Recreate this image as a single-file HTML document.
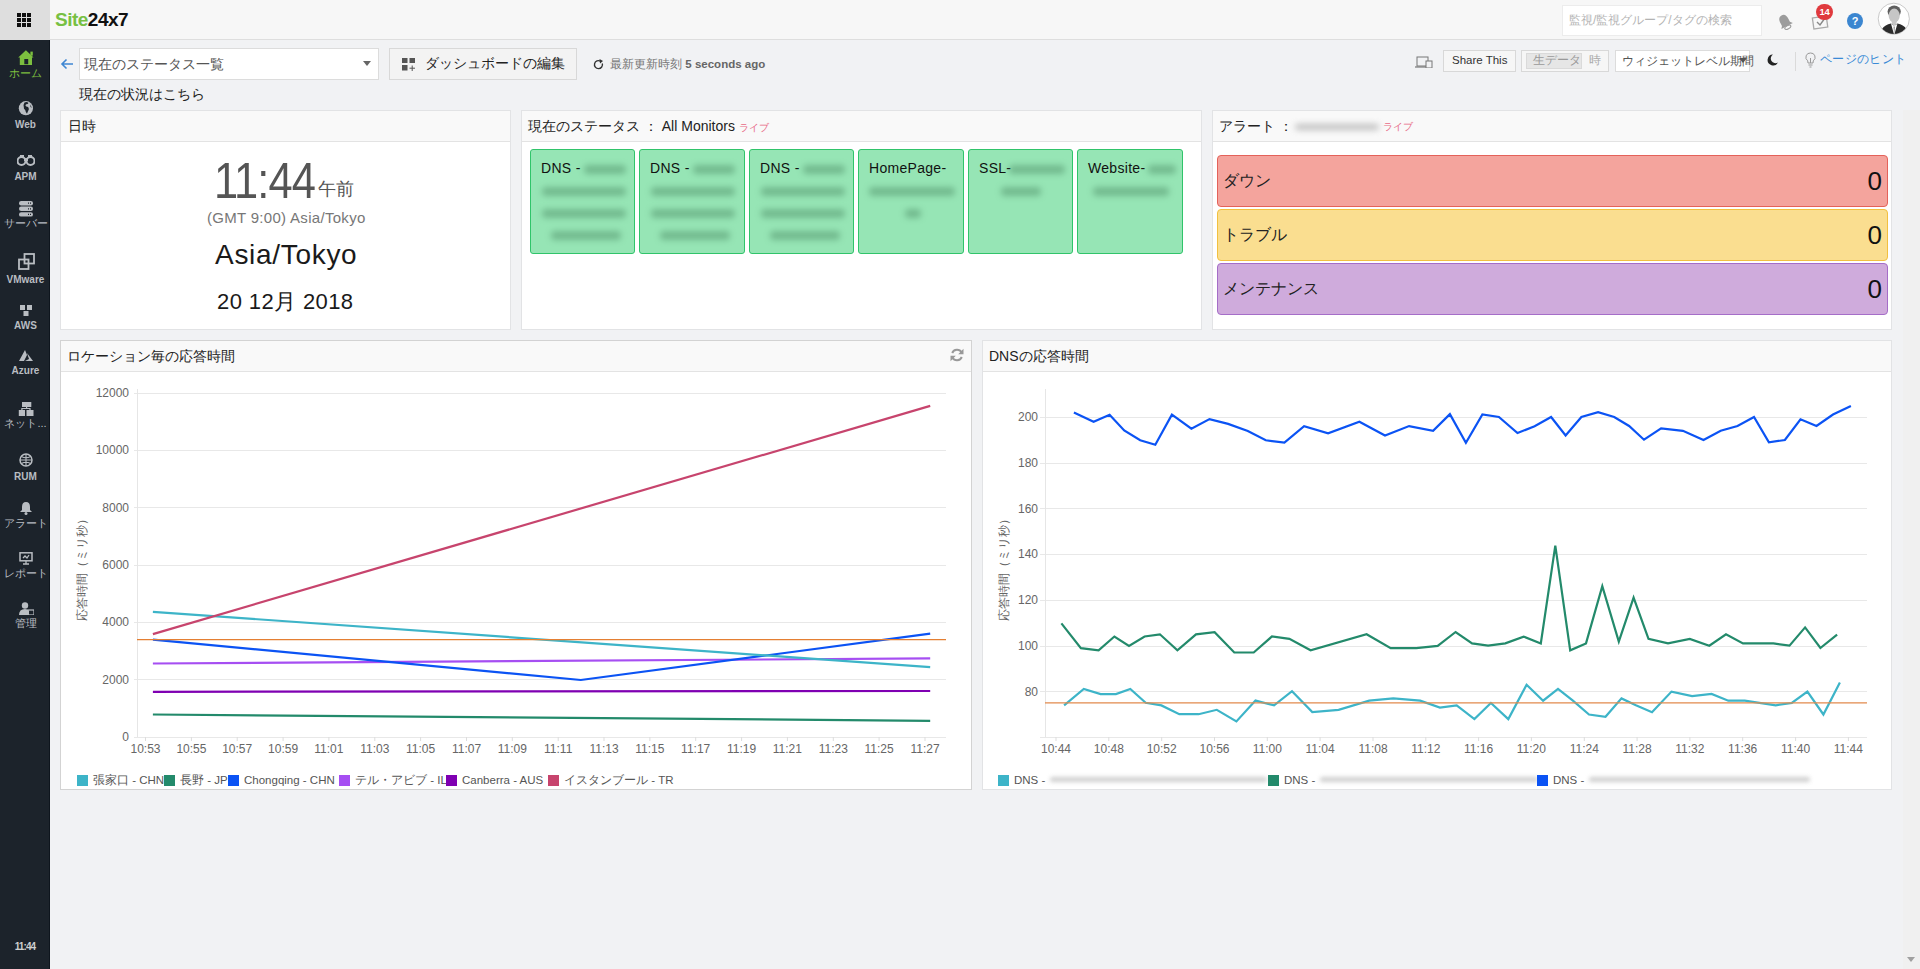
<!DOCTYPE html>
<html><head><meta charset="utf-8">
<style>
*{margin:0;padding:0;box-sizing:border-box}
html,body{width:1920px;height:969px;overflow:hidden}
body{font-family:"Liberation Sans",sans-serif;background:#f1f2f4;position:relative;color:#222}
.a{position:absolute;white-space:nowrap}
.topbar{position:absolute;left:0;top:0;width:1920px;height:40px;background:#f7f7f7;border-bottom:1px solid #dedede}
.grid{position:absolute;left:0;top:0;width:50px;height:40px;background:#dedede}
.side{position:absolute;left:0;top:40px;width:50px;height:929px;background:#1c232b;border-right:1px solid #0e151d}
.sl{position:absolute;left:0;width:51px;text-align:center;color:#b5bac0;font-size:10px;line-height:10px;white-space:nowrap}
.panel{position:absolute;background:#fff;border:1px solid #e2e3e5}
.ph{position:absolute;left:0;top:0;right:0;height:31px;background:#f9f9f9;border-bottom:1px solid #e3e3e3}
.pt{position:absolute;left:6px;top:8px;font-size:14px;line-height:16px;color:#222;white-space:nowrap}
.tile{position:absolute;top:38px;width:106px;height:105px;background:#96e5b5;border:1px solid #30c46a;border-radius:3px}
.tt{position:absolute;left:10px;top:10px;font-size:14px;line-height:16px;color:#111;white-space:nowrap;letter-spacing:0.3px}
.blur{position:absolute;height:9px;background:#4f8f68;filter:blur(3px);border-radius:4px;opacity:.5}
.bar{position:absolute;left:4px;width:671px;height:52px;border-radius:4px}
.bt{position:absolute;left:5px;top:16px;font-size:16px;line-height:18px;color:#222}
.bn{position:absolute;right:5px;top:11px;font-size:26px;line-height:28px;color:#111}
.btn{position:absolute;background:#f3f3f3;border:1px solid #d8d8d8}
</style></head><body>

<div class="topbar"></div><div class="grid"></div>
<div class="a" style="left:17px;top:13px;width:4px;height:4px;background:#111"></div>
<div class="a" style="left:17px;top:18px;width:4px;height:4px;background:#111"></div>
<div class="a" style="left:17px;top:23px;width:4px;height:4px;background:#111"></div>
<div class="a" style="left:22px;top:13px;width:4px;height:4px;background:#111"></div>
<div class="a" style="left:22px;top:18px;width:4px;height:4px;background:#111"></div>
<div class="a" style="left:22px;top:23px;width:4px;height:4px;background:#111"></div>
<div class="a" style="left:27px;top:13px;width:4px;height:4px;background:#111"></div>
<div class="a" style="left:27px;top:18px;width:4px;height:4px;background:#111"></div>
<div class="a" style="left:27px;top:23px;width:4px;height:4px;background:#111"></div>
<div class="a" style="left:55px;top:8px;font-size:19px;line-height:23px;font-weight:bold;letter-spacing:-0.5px"><span style="color:#77c043">Site</span><span style="color:#111">24x7</span></div>
<div class="a" style="left:1562px;top:5px;width:200px;height:31px;background:#fff;border:1px solid #ececec"></div>
<div class="a" style="left:1569px;top:13px;font-size:12px;line-height:15px;color:#b3b3b3">監視/監視グループ/タグの検索</div>
<svg class="a" style="left:1776px;top:13px" width="18" height="18" viewBox="0 0 18 18"><g transform="rotate(-28 9 9)"><path d="M9 1.5 C5.5 1.5 4.5 4.5 4.5 8 L4.5 11 L2.5 13.5 L15.5 13.5 L13.5 11 L13.5 8 C13.5 4.5 12.5 1.5 9 1.5Z" fill="#9c9c9c"/><ellipse cx="9" cy="15" rx="3.3" ry="1.6" fill="none" stroke="#9c9c9c" stroke-width="1.1"/></g></svg>
<svg class="a" style="left:1810px;top:12px" width="20" height="18" viewBox="0 0 20 18"><rect x="3" y="5" width="14" height="11" fill="none" stroke="#aaa" stroke-width="1.3" transform="rotate(-8 10 10)"/><path d="M7 10 L10 13 L15 6" stroke="#888" stroke-width="1.4" fill="none"/></svg>
<div class="a" style="left:1816px;top:4px;width:17px;height:16px;border-radius:8px;background:#e03a3e;color:#fff;font-size:9.5px;font-weight:bold;line-height:16px;text-align:center;letter-spacing:-0.3px">14</div>
<div class="a" style="left:1847px;top:13px;width:16px;height:16px;border-radius:50%;background:#3b86d0;color:#fff;font-size:11px;font-weight:bold;line-height:16px;text-align:center">?</div>
<svg class="a" style="left:1877px;top:2px" width="34" height="34" viewBox="0 0 34 34"><circle cx="16.8" cy="16.8" r="15.6" fill="#fff" stroke="#bdbdbd" stroke-width="0.8"/><clipPath id="cav"><circle cx="16.8" cy="16.8" r="15.2"/></clipPath><g clip-path="url(#cav)"><ellipse cx="17.2" cy="9.6" rx="6.6" ry="6" fill="#5f5f5f"/><ellipse cx="17.2" cy="13.6" rx="5.6" ry="7" fill="#c6c6c6"/><rect x="14.8" y="18" width="4.8" height="5" fill="#c6c6c6"/><path d="M3 34 L5 27 Q8 22.5 14 21.5 L17.2 24 L20.4 21.5 Q26.5 22.5 29.5 27 L31 34Z" fill="#2c2c2c"/><path d="M14 21.8 L17.2 33 L20.4 21.8 L17.2 24Z" fill="#fff"/><path d="M16.4 24.5 L17.2 33 L18 24.5Z" fill="#9a9a9a"/></g></svg>
<div class="side"></div>
<div class="sl" style="top:68px;color:#7cbf3f;font-size:11px;font-weight:normal">ホーム</div>
<svg class="a" style="left:18px;top:50px" width="16" height="16" viewBox="0 0 16 16"><path d="M7.9 0.3 L15.6 7.6 L0.2 7.6Z" fill="#7cbf3f"/><rect x="12.4" y="1.6" width="2.4" height="4" fill="#7cbf3f"/><rect x="1.8" y="7" width="12.2" height="8" fill="#7cbf3f"/><rect x="6.3" y="9" width="3.9" height="5.2" fill="#1c232b"/></svg>
<div class="sl" style="top:119.5px;color:#b9bdc2;font-size:10px;font-weight:bold">Web</div>
<svg class="a" style="left:18px;top:100px" width="16" height="16" viewBox="0 0 16 16"><circle cx="7.9" cy="8.2" r="7.1" fill="#b9bdc2"/><path d="M6.5 2.5 Q9 1.5 10.5 3 Q9.5 4.5 8 4.2 Q6.8 5.5 8.2 6.6 Q11 6.8 10.8 9.5 Q9.8 11.5 9 13.8 Q7.6 12 7.2 10 Q5.5 9 5.8 7 Q5 5 6.5 2.5Z M12 4.5 Q13.5 6 13.6 8 Q12.3 7.5 12 4.5Z" fill="#1c232b"/></svg>
<div class="sl" style="top:171.5px;color:#b9bdc2;font-size:10px;font-weight:bold">APM</div>
<svg class="a" style="left:17px;top:154px" width="18" height="12" viewBox="0 0 18 12"><circle cx="4.5" cy="7" r="4" fill="none" stroke="#b9bdc2" stroke-width="2"/><circle cx="13.5" cy="7" r="4" fill="none" stroke="#b9bdc2" stroke-width="2"/><rect x="3" y="1" width="4" height="3" fill="#b9bdc2"/><rect x="11" y="1" width="4" height="3" fill="#b9bdc2"/><rect x="7" y="4" width="4" height="3" fill="#b9bdc2"/></svg>
<div class="sl" style="top:218px;color:#b9bdc2;font-size:11px;font-weight:normal">サーバー</div>
<svg class="a" style="left:19px;top:201px" width="14" height="16" viewBox="0 0 14 16"><rect x="0" y="0" width="14" height="4.4" rx="2.2" fill="#b9bdc2"/><rect x="0" y="5.6" width="14" height="4.4" rx="2.2" fill="#b9bdc2"/><rect x="0" y="11.2" width="14" height="4.4" rx="2.2" fill="#b9bdc2"/><path d="M9 2.2h1M11 2.2h1M9 7.8h1M11 7.8h1M9 13.4h1M11 13.4h1" stroke="#1c232b" stroke-width="1.2"/></svg>
<div class="sl" style="top:274.5px;color:#b9bdc2;font-size:10px;font-weight:bold">VMware</div>
<svg class="a" style="left:18px;top:253px" width="17" height="17" viewBox="0 0 17 17"><rect x="6.5" y="1" width="9.5" height="9.5" fill="none" stroke="#b9bdc2" stroke-width="1.8"/><rect x="1" y="6.5" width="9.5" height="9.5" fill="none" stroke="#b9bdc2" stroke-width="1.8"/></svg>
<div class="sl" style="top:321.0px;color:#b9bdc2;font-size:10px;font-weight:bold">AWS</div>
<svg class="a" style="left:20px;top:304.5px" width="12" height="12" viewBox="0 0 12 12"><rect x="0" y="0" width="5" height="5" fill="#b9bdc2"/><rect x="7" y="0" width="5" height="5" fill="#b9bdc2"/><rect x="3.5" y="6" width="5" height="5" fill="#b9bdc2"/></svg>
<div class="sl" style="top:365.5px;color:#b9bdc2;font-size:10px;font-weight:bold">Azure</div>
<svg class="a" style="left:19px;top:350px" width="14" height="11" viewBox="0 0 14 11"><path d="M6 0 L0 11 L5 11 L8 5Z M8 3 L14 11 L6 11 L10 9Z" fill="#b9bdc2"/></svg>
<div class="sl" style="top:418px;color:#b9bdc2;font-size:11px;font-weight:normal">ネット...</div>
<svg class="a" style="left:18px;top:401px" width="16" height="16" viewBox="0 0 16 16"><rect x="4" y="1" width="9.3" height="5" fill="#b9bdc2"/><rect x="0.8" y="9" width="6.2" height="6" fill="#b9bdc2"/><rect x="8.5" y="9" width="7" height="6" fill="#b9bdc2"/><path d="M8.6 6 V7.8 M3.9 9 V7.5 H12 V9" stroke="#b9bdc2" stroke-width="1.2" fill="none"/></svg>
<div class="sl" style="top:471.5px;color:#b9bdc2;font-size:10px;font-weight:bold">RUM</div>
<svg class="a" style="left:19px;top:453px" width="14" height="14" viewBox="0 0 14 14"><circle cx="7" cy="7" r="6" fill="none" stroke="#b9bdc2" stroke-width="1.5"/><path d="M1 7 H13 M7 1 V13 M2.5 3.5 Q7 6 11.5 3.5 M2.5 10.5 Q7 8 11.5 10.5" stroke="#b9bdc2" stroke-width="1.1" fill="none"/></svg>
<div class="sl" style="top:518px;color:#b9bdc2;font-size:11px;font-weight:normal">アラート</div>
<svg class="a" style="left:19px;top:502px" width="14" height="13" viewBox="0 0 14 13"><path d="M7 0 Q11 0 11 5 L11 8 L13 10 L1 10 L3 8 L3 5 Q3 0 7 0Z" fill="#b9bdc2"/><circle cx="7" cy="11.5" r="1.5" fill="#b9bdc2"/></svg>
<div class="sl" style="top:568px;color:#b9bdc2;font-size:11px;font-weight:normal">レポート</div>
<svg class="a" style="left:19px;top:552px" width="14" height="13" viewBox="0 0 14 13"><rect x="1" y="0.8" width="12" height="8" fill="none" stroke="#b9bdc2" stroke-width="1.5"/><path d="M4 6 L6 4 L8 6 L10 3 M7 9 V12 M4 12 H10" stroke="#b9bdc2" stroke-width="1.3" fill="none"/></svg>
<div class="sl" style="top:618px;color:#b9bdc2;font-size:11px;font-weight:normal">管理</div>
<svg class="a" style="left:19px;top:602px" width="15" height="13" viewBox="0 0 15 13"><circle cx="6" cy="3.5" r="3.2" fill="#b9bdc2"/><path d="M0 13 Q0 7 6 7 Q9 7 10 9 L10 13Z" fill="#b9bdc2"/><rect x="9" y="8" width="6" height="5" fill="none" stroke="#b9bdc2" stroke-width="1.2"/></svg>
<div class="a" style="left:0;top:941px;width:50px;text-align:center;color:#cfcfcf;font-size:10px;font-weight:bold;line-height:11px;letter-spacing:-0.9px">11:44</div>
<svg class="a" style="left:60px;top:58px" width="14" height="12" viewBox="0 0 14 12"><path d="M13 6 H2 M6.5 1.5 L2 6 L6.5 10.5" stroke="#3f87d2" stroke-width="1.6" fill="none"/></svg>
<div class="a" style="left:79px;top:48px;width:300px;height:32px;background:#fff;border:1px solid #dcdcdc"></div>
<div class="a" style="left:84px;top:56px;font-size:14px;line-height:16px;color:#555">現在のステータス一覧</div>
<div class="a" style="left:363px;top:61px;width:0;height:0;border-left:4.5px solid transparent;border-right:4.5px solid transparent;border-top:5px solid #666"></div>
<div class="btn" style="left:389px;top:48px;width:188px;height:32px"></div>
<svg class="a" style="left:402px;top:58px" width="14" height="13" viewBox="0 0 14 13"><rect x="0" y="0" width="5.5" height="5" fill="#555"/><rect x="7.5" y="0" width="5.5" height="5" fill="#555"/><rect x="0" y="7" width="5.5" height="5.5" fill="#555"/><path d="M10.2 7.5 V13 M7.5 10.2 H13" stroke="#555" stroke-width="1"/></svg>
<div class="a" style="left:425px;top:55px;font-size:14px;line-height:16px;color:#222">ダッシュボードの編集</div>
<svg class="a" style="left:593px;top:59px" width="11" height="11" viewBox="0 0 11 11"><path d="M9.3 4.5 A4 4 0 1 1 7.5 2.2" stroke="#333" stroke-width="1.4" fill="none"/><path d="M6.5 0 L10 2 L7 4.5Z" fill="#333"/></svg>
<div class="a" style="left:610px;top:57px;font-size:12px;line-height:14px;color:#777">最新更新時刻 <b style="color:#666;font-size:11.5px">5 seconds ago</b></div>
<div class="a" style="left:79px;top:86px;font-size:14px;line-height:16px;color:#222">現在の状況はこちら</div>
<svg class="a" style="left:1415px;top:56px" width="18" height="12" viewBox="0 0 18 12"><rect x="2" y="1" width="11" height="9" fill="none" stroke="#777" stroke-width="1"/><rect x="11" y="5" width="6" height="7" fill="#f1f2f4" stroke="#777" stroke-width="1"/><path d="M0 11 H11" stroke="#777" stroke-width="1.2"/></svg>
<div class="btn" style="left:1443px;top:50px;width:73px;height:22px;background:#f6f6f6"></div>
<div class="a" style="left:1452px;top:53px;font-size:11.5px;line-height:14px;color:#333">Share This</div>
<div class="btn" style="left:1521px;top:50px;width:88px;height:22px;background:#f6f6f6"></div>
<div class="a" style="left:1526px;top:53px;width:56px;height:16px;background:#e6e6e6;border:1px solid #dadada"></div>
<div class="a" style="left:1533px;top:53px;font-size:11.5px;line-height:14px;color:#999">生データ</div>
<div class="a" style="left:1589px;top:53px;font-size:11.5px;line-height:14px;color:#aaa">時</div>
<div class="a" style="left:1615px;top:50px;width:135px;height:22px;background:#fff;border:1px solid #dcdcdc"></div>
<div class="a" style="left:1622px;top:54px;font-size:12px;line-height:14px;color:#555">ウィジェットレベル期間</div><div class="a" style="left:1739px;top:58px;width:0;height:0;border-left:4px solid transparent;border-right:4px solid transparent;border-top:5px solid #555"></div>
<svg class="a" style="left:1766px;top:54px" width="13" height="12" viewBox="0 0 13 12"><path d="M7 0.5 A5.5 5.5 0 1 0 12 8.5 A4.6 4.6 0 0 1 7 0.5Z" fill="#222"/></svg>
<div class="a" style="left:1795px;top:52px;width:1px;height:19px;background:#dadada"></div>
<svg class="a" style="left:1805px;top:52px" width="11" height="16" viewBox="0 0 11 16"><path d="M5.5 1 A4.3 4.3 0 0 1 8.3 8.8 L8 11 L3 11 L2.7 8.8 A4.3 4.3 0 0 1 5.5 1Z" fill="none" stroke="#999" stroke-width="1"/><path d="M3.5 13 H7.5 M4.5 15 H6.5 M5.5 11 V6" stroke="#999" stroke-width="1"/></svg>
<div class="a" style="left:1820px;top:52px;font-size:12px;line-height:14px;color:#3a8ad6;letter-spacing:0.35px">ページのヒント</div>
<div class="panel" style="left:60px;top:110px;width:451px;height:220px"><div class="ph"></div><div class="pt" style="left:7px;top:7px">日時</div></div>
<div class="a" id="clk" style="left:214px;top:154px;font-size:50px;line-height:54px;color:#555;letter-spacing:-1px;transform:scaleX(0.868);transform-origin:0 0">11:44</div>
<div class="a" style="left:318px;top:178px;font-size:18px;line-height:22px;color:#555">午前</div>
<div class="a" style="left:207px;top:209px;font-size:15px;line-height:17px;color:#777;letter-spacing:0.3px">(GMT 9:00) Asia/Tokyo</div>
<div class="a" style="left:215px;top:239px;font-size:28px;line-height:32px;color:#1a1a1a;letter-spacing:0.7px">Asia/Tokyo</div>
<div class="a" style="left:217px;top:289px;font-size:22px;line-height:26px;color:#1a1a1a;letter-spacing:0.4px">20 12月 2018</div>
<div class="panel" style="left:521px;top:110px;width:681px;height:220px"><div class="ph"></div>
<div class="pt" style="left:6px;top:7px">現在のステータス ： All Monitors <span style="color:#e86a86;font-size:10px">ライブ</span></div>
<div class="tile" style="left:8px;width:105px"><div class="tt">DNS -</div>
<div class="blur" style="left:53px;top:15px;width:42px"></div>
<div class="blur" style="left:11px;top:37px;width:84px"></div>
<div class="blur" style="left:11px;top:59px;width:84px"></div>
<div class="blur" style="left:20px;top:81px;width:70px"></div>
</div>
<div class="tile" style="left:117px;width:106px"><div class="tt">DNS -</div>
<div class="blur" style="left:53px;top:15px;width:42px"></div>
<div class="blur" style="left:11px;top:37px;width:84px"></div>
<div class="blur" style="left:11px;top:59px;width:84px"></div>
<div class="blur" style="left:20px;top:81px;width:70px"></div>
</div>
<div class="tile" style="left:227px;width:105px"><div class="tt">DNS -</div>
<div class="blur" style="left:53px;top:15px;width:42px"></div>
<div class="blur" style="left:11px;top:37px;width:84px"></div>
<div class="blur" style="left:11px;top:59px;width:84px"></div>
<div class="blur" style="left:20px;top:81px;width:70px"></div>
</div>
<div class="tile" style="left:336px;width:106px"><div class="tt">HomePage-</div>
<div class="tt" style="left:10px"></div>
<div class="blur" style="left:10px;top:37px;width:86px"></div>
<div class="blur" style="left:46px;top:59px;width:16px;opacity:.5"></div>
</div>
<div class="tile" style="left:446px;width:105px"><div class="tt">SSL-</div>
<div class="blur" style="left:40px;top:15px;width:56px"></div>
<div class="blur" style="left:32px;top:37px;width:40px"></div>
</div>
<div class="tile" style="left:555px;width:106px"><div class="tt">Website-</div>
<div class="blur" style="left:70px;top:15px;width:28px"></div>
<div class="blur" style="left:15px;top:37px;width:76px"></div>
</div>
</div>
<div class="panel" style="left:1212px;top:110px;width:680px;height:220px"><div class="ph"></div>
<div class="pt" style="left:6px;top:7px">アラート ：</div>
<div class="blur" style="left:82px;top:13px;width:84px;height:6px;background:#999;opacity:.6"></div>
<div class="a" style="left:170px;top:9px;color:#e86a86;font-size:10px;line-height:14px">ライブ</div>
<div class="bar" style="top:44px;background:#f4a49d;border:1px solid #e4625a"><div class="bt">ダウン</div><div class="bn">0</div></div>
<div class="bar" style="top:98px;background:#fade90;border:1px solid #f2c040"><div class="bt">トラブル</div><div class="bn">0</div></div>
<div class="bar" style="top:152px;background:#cfabdc;border:1px solid #a56dc8"><div class="bt">メンテナンス</div><div class="bn">0</div></div>
</div>
<div class="panel" style="left:60px;top:340px;width:912px;height:450px;border-color:#d3d3d3"><div class="ph"></div><div class="pt" style="left:6px;top:7px">ロケーション毎の応答時間</div></div>
<svg class="a" style="left:949px;top:347px" width="16" height="16" viewBox="0 0 16 16"><path d="M12.6 5.5 A5.2 5.2 0 0 0 3.2 6 M3.4 10.5 A5.2 5.2 0 0 0 12.8 10" stroke="#999" stroke-width="2" fill="none"/><path d="M14.5 1.8 V7.2 H9.2Z M1.5 14.2 V8.8 H6.8Z" fill="#999"/></svg>
<div class="panel" style="left:982px;top:340px;width:910px;height:450px"><div class="ph"></div><div class="pt" style="left:6px;top:7px">DNSの応答時間</div></div>
<svg class="a" style="left:0;top:0" width="1920" height="969" viewBox="0 0 1920 969">
<line x1="134" y1="737.5" x2="946" y2="737.5" stroke="#e8e8e8" stroke-width="1"/>
<line x1="134" y1="679.5" x2="946" y2="679.5" stroke="#e8e8e8" stroke-width="1"/>
<line x1="134" y1="622.5" x2="946" y2="622.5" stroke="#e8e8e8" stroke-width="1"/>
<line x1="134" y1="565.5" x2="946" y2="565.5" stroke="#e8e8e8" stroke-width="1"/>
<line x1="134" y1="507.5" x2="946" y2="507.5" stroke="#e8e8e8" stroke-width="1"/>
<line x1="134" y1="450.5" x2="946" y2="450.5" stroke="#e8e8e8" stroke-width="1"/>
<line x1="134" y1="393.5" x2="946" y2="393.5" stroke="#e8e8e8" stroke-width="1"/>
<line x1="137.5" y1="389" x2="137.5" y2="737" stroke="#e6e6e6" stroke-width="1"/>
<line x1="145.5" y1="737" x2="145.5" y2="741" stroke="#ddd" stroke-width="1"/>
<line x1="191.4" y1="737" x2="191.4" y2="741" stroke="#ddd" stroke-width="1"/>
<line x1="237.2" y1="737" x2="237.2" y2="741" stroke="#ddd" stroke-width="1"/>
<line x1="283.1" y1="737" x2="283.1" y2="741" stroke="#ddd" stroke-width="1"/>
<line x1="328.9" y1="737" x2="328.9" y2="741" stroke="#ddd" stroke-width="1"/>
<line x1="374.8" y1="737" x2="374.8" y2="741" stroke="#ddd" stroke-width="1"/>
<line x1="420.6" y1="737" x2="420.6" y2="741" stroke="#ddd" stroke-width="1"/>
<line x1="466.5" y1="737" x2="466.5" y2="741" stroke="#ddd" stroke-width="1"/>
<line x1="512.3" y1="737" x2="512.3" y2="741" stroke="#ddd" stroke-width="1"/>
<line x1="558.2" y1="737" x2="558.2" y2="741" stroke="#ddd" stroke-width="1"/>
<line x1="604.0" y1="737" x2="604.0" y2="741" stroke="#ddd" stroke-width="1"/>
<line x1="649.9" y1="737" x2="649.9" y2="741" stroke="#ddd" stroke-width="1"/>
<line x1="695.7" y1="737" x2="695.7" y2="741" stroke="#ddd" stroke-width="1"/>
<line x1="741.6" y1="737" x2="741.6" y2="741" stroke="#ddd" stroke-width="1"/>
<line x1="787.4" y1="737" x2="787.4" y2="741" stroke="#ddd" stroke-width="1"/>
<line x1="833.3" y1="737" x2="833.3" y2="741" stroke="#ddd" stroke-width="1"/>
<line x1="879.1" y1="737" x2="879.1" y2="741" stroke="#ddd" stroke-width="1"/>
<line x1="925.0" y1="737" x2="925.0" y2="741" stroke="#ddd" stroke-width="1"/>
<line x1="137" y1="667.1" x2="930" y2="667.1" stroke="none"/>
<polyline points="152.9,714.5 930.2,720.8" stroke="#238a6b" stroke-width="2.2" fill="none"/>
<polyline points="152.9,691.8 930.2,691.0" stroke="#7f00b2" stroke-width="2.2" fill="none"/>
<polyline points="152.9,663.5 930.2,658.4" stroke="#a64ef2" stroke-width="2.2" fill="none"/>
<polyline points="152.9,639.6 580.8,680.0 930.2,633.7" stroke="#0b53f4" stroke-width="2.2" fill="none"/>
<polyline points="152.9,611.8 930.2,667.1" stroke="#3db4c8" stroke-width="2.2" fill="none"/>
<line x1="137" y1="639.6" x2="946" y2="639.6" stroke="#e47f33" stroke-width="1.2"/>
<polyline points="152.9,634.1 930.2,405.9" stroke="#c7446d" stroke-width="2.2" fill="none"/>
<line x1="1040" y1="691.5" x2="1867" y2="691.5" stroke="#e8e8e8" stroke-width="1"/>
<line x1="1040" y1="646.5" x2="1867" y2="646.5" stroke="#e8e8e8" stroke-width="1"/>
<line x1="1040" y1="600.5" x2="1867" y2="600.5" stroke="#e8e8e8" stroke-width="1"/>
<line x1="1040" y1="554.5" x2="1867" y2="554.5" stroke="#e8e8e8" stroke-width="1"/>
<line x1="1040" y1="508.5" x2="1867" y2="508.5" stroke="#e8e8e8" stroke-width="1"/>
<line x1="1040" y1="463.5" x2="1867" y2="463.5" stroke="#e8e8e8" stroke-width="1"/>
<line x1="1040" y1="417.5" x2="1867" y2="417.5" stroke="#e8e8e8" stroke-width="1"/>
<line x1="1040" y1="737.5" x2="1867" y2="737.5" stroke="#e8e8e8" stroke-width="1"/>
<line x1="1045.5" y1="389" x2="1045.5" y2="737" stroke="#e6e6e6" stroke-width="1"/>
<line x1="1056.0" y1="737" x2="1056.0" y2="741" stroke="#ddd" stroke-width="1"/>
<line x1="1108.8" y1="737" x2="1108.8" y2="741" stroke="#ddd" stroke-width="1"/>
<line x1="1161.7" y1="737" x2="1161.7" y2="741" stroke="#ddd" stroke-width="1"/>
<line x1="1214.5" y1="737" x2="1214.5" y2="741" stroke="#ddd" stroke-width="1"/>
<line x1="1267.3" y1="737" x2="1267.3" y2="741" stroke="#ddd" stroke-width="1"/>
<line x1="1320.1" y1="737" x2="1320.1" y2="741" stroke="#ddd" stroke-width="1"/>
<line x1="1373.0" y1="737" x2="1373.0" y2="741" stroke="#ddd" stroke-width="1"/>
<line x1="1425.8" y1="737" x2="1425.8" y2="741" stroke="#ddd" stroke-width="1"/>
<line x1="1478.6" y1="737" x2="1478.6" y2="741" stroke="#ddd" stroke-width="1"/>
<line x1="1531.4" y1="737" x2="1531.4" y2="741" stroke="#ddd" stroke-width="1"/>
<line x1="1584.3" y1="737" x2="1584.3" y2="741" stroke="#ddd" stroke-width="1"/>
<line x1="1637.1" y1="737" x2="1637.1" y2="741" stroke="#ddd" stroke-width="1"/>
<line x1="1689.9" y1="737" x2="1689.9" y2="741" stroke="#ddd" stroke-width="1"/>
<line x1="1742.7" y1="737" x2="1742.7" y2="741" stroke="#ddd" stroke-width="1"/>
<line x1="1795.6" y1="737" x2="1795.6" y2="741" stroke="#ddd" stroke-width="1"/>
<line x1="1848.4" y1="737" x2="1848.4" y2="741" stroke="#ddd" stroke-width="1"/>
<polyline points="1073.9,412.5 1093.6,421.7 1109.6,414.7 1124.2,430.5 1140.2,440.3 1155.3,444.7 1171.9,414.7 1191.4,428.7 1209.5,419.1 1228.1,423.9 1247.8,430.9 1265.8,440.3 1284.4,442.5 1304.1,426.1 1328.1,433.3 1359.4,421.7 1385.0,435.5 1409.1,426.1 1433.1,430.9 1449.9,414.1 1465.9,442.7 1482.4,414.5 1498.9,417.0 1517.5,433.1 1534.6,426.2 1551.1,417.0 1565.6,435.4 1581.4,417.0 1598.1,412.2 1614.2,417.0 1629.1,426.0 1644.0,439.7 1661.1,428.3 1682.9,430.8 1703.5,440.0 1720.7,430.8 1737.5,426.0 1754.0,417.0 1768.9,442.3 1784.9,440.0 1800.5,419.3 1816.5,426.0 1833.0,414.5 1850.9,406.0" stroke="#0b53f4" stroke-width="2.2" fill="none" stroke-linejoin="miter"/>
<polyline points="1061.4,623.4 1080.9,648.1 1098.6,650.3 1114.4,636.5 1129.0,645.9 1144.6,636.5 1159.9,634.3 1177.4,650.3 1196.0,634.3 1214.6,632.2 1234.3,652.5 1253.7,652.5 1271.9,636.5 1289.4,638.9 1310.6,650.3 1366.6,634.3 1390.7,648.1 1416.3,648.1 1437.7,645.9 1455.6,632.0 1472.1,643.4 1488.1,645.7 1505.3,643.4 1523.6,636.6 1540.8,643.4 1555.3,545.6 1570.2,650.3 1586.0,643.4 1602.3,586.1 1618.8,641.6 1633.6,597.6 1648.5,638.9 1668.0,643.4 1689.8,638.9 1709.3,645.7 1726.0,634.3 1743.0,643.4 1773.4,643.4 1789.5,645.7 1805.1,627.4 1820.4,648.0 1837.1,634.7" stroke="#238a6b" stroke-width="2.2" fill="none"/>
<polyline points="1064.1,705.4 1083.8,689.0 1100.6,694.1 1115.9,694.1 1130.3,689.0 1145.7,702.8 1161.4,705.4 1179.3,714.2 1198.6,714.2 1216.8,709.8 1236.4,721.4 1255.5,700.6 1274.1,705.4 1292.0,691.2 1312.3,712.0 1338.6,709.8 1369.2,700.6 1393.3,698.4 1420.2,700.6 1439.9,707.6 1456.7,705.3 1474.4,719.1 1490.9,703.0 1508.3,719.1 1526.6,684.7 1543.1,700.7 1558.0,688.8 1572.9,700.7 1589.0,714.5 1605.5,716.8 1621.5,698.4 1635.9,705.3 1652.0,712.2 1671.5,691.6 1692.1,696.1 1711.6,693.9 1728.3,700.7 1744.8,700.7 1775.7,705.3 1791.8,703.0 1807.4,691.6 1823.4,714.5 1839.9,682.4" stroke="#3db4c8" stroke-width="2.2" fill="none"/>
<line x1="1045" y1="702.8" x2="1867" y2="702.8" stroke="#e28a4c" stroke-width="1.2"/>
</svg>
<div class="a" style="left:60px;width:69px;text-align:right;top:730px;font-size:12px;line-height:14px;color:#666">0</div>
<div class="a" style="left:60px;width:69px;text-align:right;top:673px;font-size:12px;line-height:14px;color:#666">2000</div>
<div class="a" style="left:60px;width:69px;text-align:right;top:615px;font-size:12px;line-height:14px;color:#666">4000</div>
<div class="a" style="left:60px;width:69px;text-align:right;top:558px;font-size:12px;line-height:14px;color:#666">6000</div>
<div class="a" style="left:60px;width:69px;text-align:right;top:501px;font-size:12px;line-height:14px;color:#666">8000</div>
<div class="a" style="left:60px;width:69px;text-align:right;top:443px;font-size:12px;line-height:14px;color:#666">10000</div>
<div class="a" style="left:60px;width:69px;text-align:right;top:386px;font-size:12px;line-height:14px;color:#666">12000</div>
<div class="a" style="left:125.5px;width:40px;text-align:center;top:742px;font-size:12px;line-height:14px;color:#666">10:53</div>
<div class="a" style="left:171.4px;width:40px;text-align:center;top:742px;font-size:12px;line-height:14px;color:#666">10:55</div>
<div class="a" style="left:217.2px;width:40px;text-align:center;top:742px;font-size:12px;line-height:14px;color:#666">10:57</div>
<div class="a" style="left:263.1px;width:40px;text-align:center;top:742px;font-size:12px;line-height:14px;color:#666">10:59</div>
<div class="a" style="left:308.9px;width:40px;text-align:center;top:742px;font-size:12px;line-height:14px;color:#666">11:01</div>
<div class="a" style="left:354.8px;width:40px;text-align:center;top:742px;font-size:12px;line-height:14px;color:#666">11:03</div>
<div class="a" style="left:400.6px;width:40px;text-align:center;top:742px;font-size:12px;line-height:14px;color:#666">11:05</div>
<div class="a" style="left:446.5px;width:40px;text-align:center;top:742px;font-size:12px;line-height:14px;color:#666">11:07</div>
<div class="a" style="left:492.3px;width:40px;text-align:center;top:742px;font-size:12px;line-height:14px;color:#666">11:09</div>
<div class="a" style="left:538.2px;width:40px;text-align:center;top:742px;font-size:12px;line-height:14px;color:#666">11:11</div>
<div class="a" style="left:584.0px;width:40px;text-align:center;top:742px;font-size:12px;line-height:14px;color:#666">11:13</div>
<div class="a" style="left:629.9px;width:40px;text-align:center;top:742px;font-size:12px;line-height:14px;color:#666">11:15</div>
<div class="a" style="left:675.7px;width:40px;text-align:center;top:742px;font-size:12px;line-height:14px;color:#666">11:17</div>
<div class="a" style="left:721.6px;width:40px;text-align:center;top:742px;font-size:12px;line-height:14px;color:#666">11:19</div>
<div class="a" style="left:767.4px;width:40px;text-align:center;top:742px;font-size:12px;line-height:14px;color:#666">11:21</div>
<div class="a" style="left:813.3px;width:40px;text-align:center;top:742px;font-size:12px;line-height:14px;color:#666">11:23</div>
<div class="a" style="left:859.1px;width:40px;text-align:center;top:742px;font-size:12px;line-height:14px;color:#666">11:25</div>
<div class="a" style="left:905.0px;width:40px;text-align:center;top:742px;font-size:12px;line-height:14px;color:#666">11:27</div>
<div class="a" style="left:82px;top:567px;width:0;height:0"><div style="position:absolute;left:0;top:0;transform:translate(-50%,-50%) rotate(-90deg);font-size:12px;line-height:13px;color:#666;white-space:nowrap">応答時間（ミリ秒）</div></div>
<div class="a" style="left:990px;width:48px;text-align:right;top:685px;font-size:12px;line-height:14px;color:#666">80</div>
<div class="a" style="left:990px;width:48px;text-align:right;top:639px;font-size:12px;line-height:14px;color:#666">100</div>
<div class="a" style="left:990px;width:48px;text-align:right;top:593px;font-size:12px;line-height:14px;color:#666">120</div>
<div class="a" style="left:990px;width:48px;text-align:right;top:547px;font-size:12px;line-height:14px;color:#666">140</div>
<div class="a" style="left:990px;width:48px;text-align:right;top:502px;font-size:12px;line-height:14px;color:#666">160</div>
<div class="a" style="left:990px;width:48px;text-align:right;top:456px;font-size:12px;line-height:14px;color:#666">180</div>
<div class="a" style="left:990px;width:48px;text-align:right;top:410px;font-size:12px;line-height:14px;color:#666">200</div>
<div class="a" style="left:1036.0px;width:40px;text-align:center;top:742px;font-size:12px;line-height:14px;color:#666">10:44</div>
<div class="a" style="left:1088.8px;width:40px;text-align:center;top:742px;font-size:12px;line-height:14px;color:#666">10:48</div>
<div class="a" style="left:1141.7px;width:40px;text-align:center;top:742px;font-size:12px;line-height:14px;color:#666">10:52</div>
<div class="a" style="left:1194.5px;width:40px;text-align:center;top:742px;font-size:12px;line-height:14px;color:#666">10:56</div>
<div class="a" style="left:1247.3px;width:40px;text-align:center;top:742px;font-size:12px;line-height:14px;color:#666">11:00</div>
<div class="a" style="left:1300.1px;width:40px;text-align:center;top:742px;font-size:12px;line-height:14px;color:#666">11:04</div>
<div class="a" style="left:1353.0px;width:40px;text-align:center;top:742px;font-size:12px;line-height:14px;color:#666">11:08</div>
<div class="a" style="left:1405.8px;width:40px;text-align:center;top:742px;font-size:12px;line-height:14px;color:#666">11:12</div>
<div class="a" style="left:1458.6px;width:40px;text-align:center;top:742px;font-size:12px;line-height:14px;color:#666">11:16</div>
<div class="a" style="left:1511.4px;width:40px;text-align:center;top:742px;font-size:12px;line-height:14px;color:#666">11:20</div>
<div class="a" style="left:1564.3px;width:40px;text-align:center;top:742px;font-size:12px;line-height:14px;color:#666">11:24</div>
<div class="a" style="left:1617.1px;width:40px;text-align:center;top:742px;font-size:12px;line-height:14px;color:#666">11:28</div>
<div class="a" style="left:1669.9px;width:40px;text-align:center;top:742px;font-size:12px;line-height:14px;color:#666">11:32</div>
<div class="a" style="left:1722.7px;width:40px;text-align:center;top:742px;font-size:12px;line-height:14px;color:#666">11:36</div>
<div class="a" style="left:1775.6px;width:40px;text-align:center;top:742px;font-size:12px;line-height:14px;color:#666">11:40</div>
<div class="a" style="left:1828.4px;width:40px;text-align:center;top:742px;font-size:12px;line-height:14px;color:#666">11:44</div>
<div class="a" style="left:1004px;top:567px;width:0;height:0"><div style="position:absolute;left:0;top:0;transform:translate(-50%,-50%) rotate(-90deg);font-size:12px;line-height:13px;color:#666;white-space:nowrap">応答時間（ミリ秒）</div></div>
<div class="a" style="left:77px;top:775px;width:11px;height:11px;background:#3db4c8"></div>
<div class="a" style="left:93px;top:773px;font-size:11.5px;line-height:14px;color:#555">張家口 - CHN</div>
<div class="a" style="left:164px;top:775px;width:11px;height:11px;background:#238a6b"></div>
<div class="a" style="left:180px;top:773px;font-size:11.5px;line-height:14px;color:#555">長野 - JP</div>
<div class="a" style="left:228px;top:775px;width:11px;height:11px;background:#0b53f4"></div>
<div class="a" style="left:244px;top:773px;font-size:11.5px;line-height:14px;color:#555">Chongqing - CHN</div>
<div class="a" style="left:339px;top:775px;width:11px;height:11px;background:#a64ef2"></div>
<div class="a" style="left:355px;top:773px;font-size:11.5px;line-height:14px;color:#555">テル・アビブ - IL</div>
<div class="a" style="left:446px;top:775px;width:11px;height:11px;background:#7f00b2"></div>
<div class="a" style="left:462px;top:773px;font-size:11.5px;line-height:14px;color:#555">Canberra - AUS</div>
<div class="a" style="left:548px;top:775px;width:11px;height:11px;background:#c7446d"></div>
<div class="a" style="left:564px;top:773px;font-size:11.5px;line-height:14px;color:#555">イスタンブール - TR</div>
<div class="a" style="left:998px;top:775px;width:11px;height:11px;background:#3db4c8"></div>
<div class="a" style="left:1014px;top:773px;font-size:11.5px;line-height:14px;color:#555">DNS -</div>
<div class="blur" style="left:1050px;top:777px;width:217px;height:5px;background:#bbb;opacity:.7;filter:blur(2px)"></div>
<div class="a" style="left:1268px;top:775px;width:11px;height:11px;background:#238a6b"></div>
<div class="a" style="left:1284px;top:773px;font-size:11.5px;line-height:14px;color:#555">DNS -</div>
<div class="blur" style="left:1320px;top:777px;width:218px;height:5px;background:#bbb;opacity:.7;filter:blur(2px)"></div>
<div class="a" style="left:1537px;top:775px;width:11px;height:11px;background:#0b53f4"></div>
<div class="a" style="left:1553px;top:773px;font-size:11.5px;line-height:14px;color:#555">DNS -</div>
<div class="blur" style="left:1589px;top:777px;width:221px;height:5px;background:#bbb;opacity:.7;filter:blur(2px)"></div>
<div class="a" style="left:1903px;top:110px;width:17px;height:859px;background:#f0f0f0"></div>
<div class="a" style="left:1907px;top:957px;width:0;height:0;border-left:4px solid transparent;border-right:4px solid transparent;border-top:5px solid #a0a0a0"></div>
</body></html>
